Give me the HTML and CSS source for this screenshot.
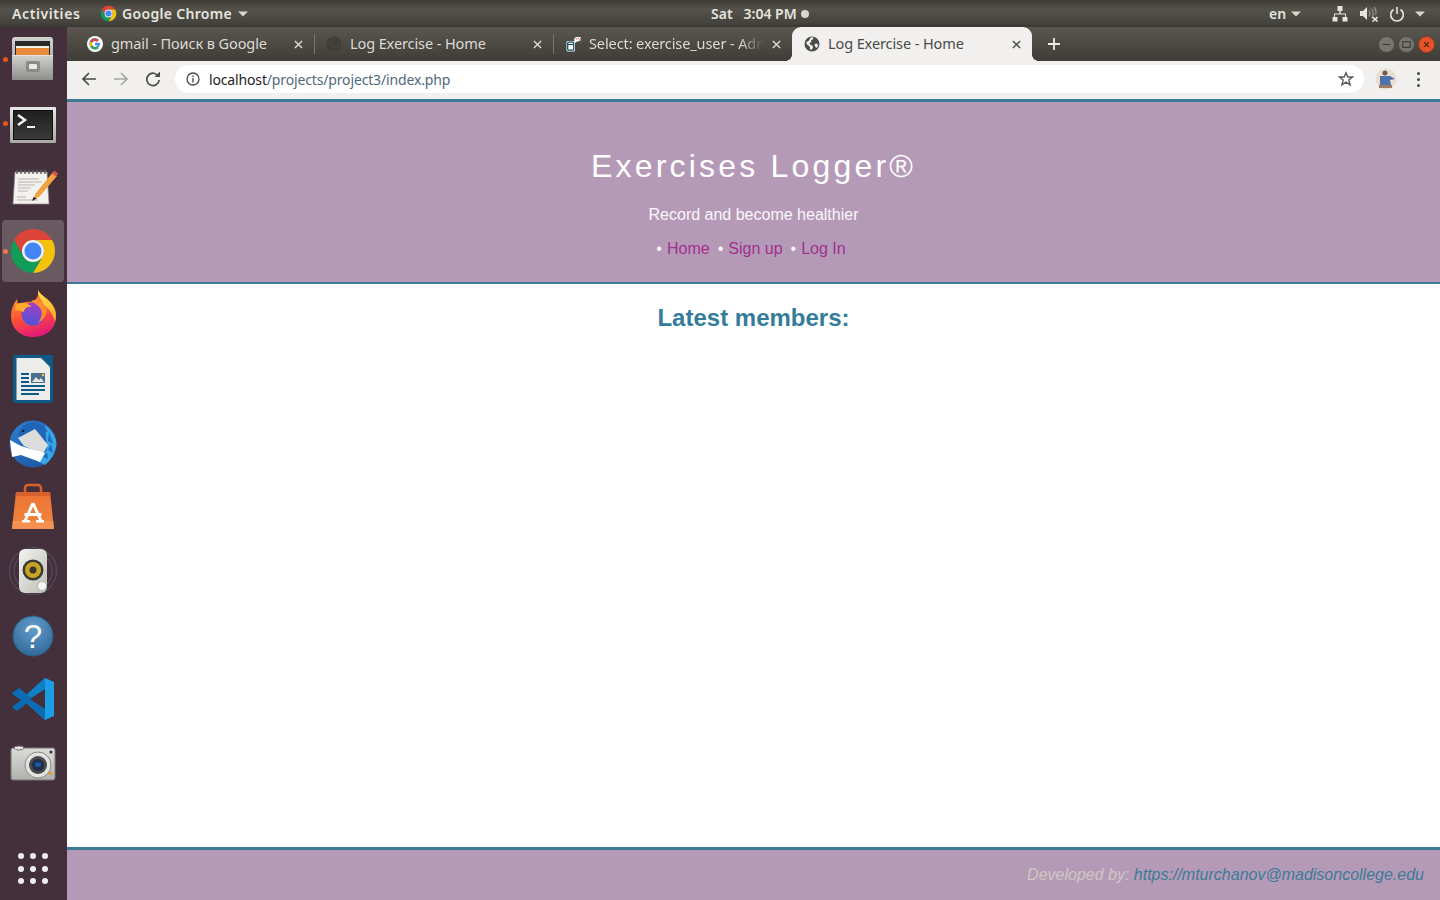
FILE: index.html
```html
<!DOCTYPE html>
<html lang="en">
<head>
<meta charset="utf-8">
<title>Log Exercise - Home</title>
<link rel="stylesheet" href="styles.css">
</head>
<body>
<svg class="defs" width="0" height="0" aria-hidden="true">
  <defs>
    <symbol id="chrome" viewBox="0 0 48 48">
      <path fill="#db4437" d="M24 2A22 22 0 0 1 43.05 13H24A11 11 0 0 0 14.47 29.5L4.95 13A22 22 0 0 1 24 2Z"/>
      <path fill="#f4c20d" d="M43.05 13A22 22 0 0 1 24 46L33.53 29.5A11 11 0 0 0 24 13Z"/>
      <path fill="#0f9d58" d="M24 46A22 22 0 0 1 4.95 13L14.47 29.5A11 11 0 0 0 33.53 29.5Z"/>
      <circle cx="24" cy="24" r="11" fill="#f1f1f1"/>
      <circle cx="24" cy="24" r="8.5" fill="#4285f4"/>
    </symbol>
    <symbol id="globe" viewBox="0 0 16 16">
      <circle cx="8" cy="8" r="7.5" fill="currentColor"/>
      <path fill="var(--land, #f1f0ee)" d="M2 6.500 5 4.500 6.500 1.500 9.500 1.200 9 3.200 7 4.200 7.500 6 5.500 7 6.500 9 8.500 9.500 9 11.500 7.500 14 6 13 5.800 10.500 3.500 9ZM10.500 8 13 7.500 14.300 9.500 12.500 12 11 10.500Z"/>
    </symbol>
    <symbol id="close" viewBox="0 0 10 10">
      <path d="M1 1 9 9M9 1 1 9" fill="none" stroke="currentColor" stroke-width="1.600"/>
    </symbol>
    <symbol id="caret" viewBox="0 0 10 6">
      <path d="M0 .5H10L5 5.500Z" fill="currentColor"/>
    </symbol>
    <linearGradient id="cabinetBody" x1="0" y1="0" x2="0" y2="1"><stop offset="0" stop-color="#d2d2d0"/><stop offset="1" stop-color="#8e8e8c"/></linearGradient>
    <linearGradient id="termFrame" x1="0" y1="0" x2="0" y2="1"><stop offset="0" stop-color="#e8e8e6"/><stop offset="1" stop-color="#a8a8a6"/></linearGradient>
    <linearGradient id="termInner" x1="0" y1="0" x2="0" y2="1"><stop offset="0" stop-color="#1f1f1f"/><stop offset="1" stop-color="#3a3a3a"/></linearGradient>
    <linearGradient id="fxBody" x1=".2" y1="0" x2=".5" y2="1"><stop offset="0" stop-color="#ffa92e"/><stop offset=".55" stop-color="#ff5236"/><stop offset="1" stop-color="#e3187c"/></linearGradient>
    <linearGradient id="fxBall" x1=".6" y1="0" x2=".3" y2="1"><stop offset="0" stop-color="#a43ec4"/><stop offset="1" stop-color="#4c55d8"/></linearGradient>
    <linearGradient id="fxTop" x1="0" y1="0" x2="1" y2="1"><stop offset="0" stop-color="#ffe84a"/><stop offset="1" stop-color="#ffa629"/></linearGradient>
    <linearGradient id="bag" x1="0" y1="0" x2="0" y2="1"><stop offset="0" stop-color="#ee7434"/><stop offset="1" stop-color="#f0843f"/></linearGradient>
    <linearGradient id="speaker" x1="0" y1="0" x2="1" y2="1"><stop offset="0" stop-color="#f4f4f0"/><stop offset="1" stop-color="#bcbcb6"/></linearGradient>
    <radialGradient id="help" cx=".5" cy=".3" r=".75"><stop offset="0" stop-color="#639fcc"/><stop offset="1" stop-color="#2f6595"/></radialGradient>
    <linearGradient id="tbird" x1="0" y1="0" x2="1" y2="1"><stop offset="0" stop-color="#2f7fd2"/><stop offset="1" stop-color="#1a4f9c"/></linearGradient>
    <linearGradient id="camera" x1="0" y1="0" x2="0" y2="1"><stop offset="0" stop-color="#dcdcda"/><stop offset="1" stop-color="#b0b0ae"/></linearGradient>
  </defs>
</svg>

<header class="topbar">
  <div class="top-left">
    <span class="activities">Activities</span>
    <svg class="top-chrome"><use href="#chrome"/></svg>
    <span class="app-name">Google Chrome</span>
    <svg class="caret"><use href="#caret"/></svg>
  </div>
  <div class="clock"><span class="day">Sat</span><span>3:04 PM</span><i class="clock-dot"></i></div>
  <div class="top-right">
    <span class="lang">en</span>
    <svg class="caret caret-lang"><use href="#caret"/></svg>
    <svg class="tray tray-net" viewBox="0 0 16 16"><path fill="#e6e4de" d="M5.500 0h5v5H8.700v2.600H14V11h1.500v4.500h-5V11H13V8.600H3V11h2.500v4.500h-5V11H2V7.600h5.300V5H5.500Z"/></svg>
    <svg class="tray tray-vol" viewBox="0 0 18 16"><path fill="#e6e4de" d="M0 5h3l4-4v13l-4-4H0Z"/><path d="M9 4.500q2 3 0 6M11.500 2.500q3.500 5 0 10M14 1q3 4 1.500 8" fill="none" stroke="#8f8d87" stroke-width="1.300"/><path d="M12.500 11l5 4.500M17.500 11l-5 4.500" stroke="#e6e4de" stroke-width="1.600"/></svg>
    <svg class="tray tray-power" viewBox="0 0 16 16"><path d="M8 1v7" stroke="#e6e4de" stroke-width="1.600"/><path d="M4.500 3.500a6.300 6.300 0 1 0 7 0" fill="none" stroke="#e6e4de" stroke-width="1.600"/></svg>
    <svg class="caret caret-power"><use href="#caret"/></svg>
  </div>
</header>

<div class="desktop">
  <nav class="dock">
    <div class="dock-item running">
      <svg class="dock-icon" viewBox="0 0 48 48">
        <rect x="3" y="1" width="41" height="43" rx="3" fill="url(#cabinetBody)"/>
        <rect x="6" y="5" width="35" height="14" fill="#2b2a2a"/>
        <rect x="7" y="10" width="33" height="2" fill="#f4f1e8"/>
        <rect x="7" y="12" width="33" height="7" fill="#e98b3d"/>
        <rect x="3" y="19" width="41" height="25" rx="1" fill="url(#cabinetBody)"/>
        <rect x="3" y="19" width="41" height="1" fill="#e4e4e2"/>
        <rect x="17" y="25" width="14" height="11" rx="2" fill="#8a8a88"/>
        <rect x="20" y="28" width="8" height="5" rx="1" fill="#e8e8e6"/>
      </svg>
    </div>
    <div class="dock-item running">
      <svg class="dock-icon" viewBox="0 0 48 48">
        <rect x="1" y="7" width="46" height="36" rx="1" fill="url(#termFrame)"/>
        <rect x="4.500" y="10.500" width="39" height="29" fill="url(#termInner)" stroke="#111" stroke-width="1"/>
        <path d="M9 15 16 20 9 25" fill="none" stroke="#f2f2f0" stroke-width="2.500"/>
        <rect x="18" y="26" width="8" height="2" fill="#f2f2f0"/>
      </svg>
    </div>
    <div class="dock-item">
      <svg class="dock-icon" viewBox="0 0 48 48">
        <path d="M6 8H38L40 40H4Z" fill="#f3f2ee" stroke="#8f8d88" stroke-width=".7"/>
        <path d="M8 5v5M12 5v5M16 5v5M20 5v5M24 5v5M28 5v5M32 5v5M36 5v5" stroke="#555" stroke-width="1.300"/>
        <path d="M9 15H30M9 18H33M9 21H26M9 24H22M9 27H19M8 33H17M8 36H29" stroke="#b5b3ae" stroke-width="1"/>
        <path d="M24 35 27 29 44 8 48 12 30 33Z" fill="#f0a33e"/>
        <path d="M43 9.500 45.500 6.500 49 9.500 47 12.500Z" fill="#d9534f"/>
        <path d="M23 37 24.500 33 28 34.500Z" fill="#2e2b28"/>
      </svg>
    </div>
    <div class="dock-item running active">
      <svg class="dock-icon"><use href="#chrome"/></svg>
    </div>
    <div class="dock-item">
      <svg class="dock-icon" viewBox="0 0 48 48">
        <path d="M29 -2C31 3 38 6 42 11 47 17 48 24 46 31 43 40 34 45 24 45 11 45 2 36 2 24 2 18 4 12 8 7 8 10 9 12 11 13 14 10 18 9 22 10 28 8 30 3 29 -2Z" fill="url(#fxBody)"/>
        <path d="M29 -2C31 3 38 6 42 11 47 17 48 23 46 30 44 22 40 17 35 13 33 8 29 5 29 -2Z" fill="url(#fxTop)"/>
        <circle cx="24" cy="22" r="11.500" fill="url(#fxBall)"/>
        <path d="M7 13C12 9 19 11 23 15 18 14 15 17 15 20 12 19 9 18 6 19 6 17 6.500 15 7 13Z" fill="#ffa92e"/>
        <path d="M22 9C28 6 36 10 38 18 37 24 34 28 29 31 33 26 34 20 31 16 28 12 25 11 22 9Z" fill="#ff8f2e"/>
      </svg>
    </div>
    <div class="dock-item">
      <svg class="dock-icon" viewBox="0 0 48 48">
        <path d="M6 -1H33L44 10V44a3 3 0 0 1-3 3H7a3 3 0 0 1-3-3V1a2 2 0 0 1 2-2Z" fill="#0e5a88"/>
        <path d="M7.500 2H32L41 11V44H7.500Z" fill="#ececea"/>
        <path d="M33 -1H42a2 2 0 0 1 2 2V11Z" fill="#0e5a88"/>
        <path d="M12 17h8v2h-8zM12 21h8v2h-8zM12 25h8v2h-8zM12 29h24v2H12zM12 33h24v2H12zM12 37h18v2H12z" fill="#0e5a88"/>
        <rect x="22" y="17" width="14" height="10" fill="#4a6f8c"/>
        <path d="M23 26 27 21 30 24 32 22 35 26Z" fill="#e4e4e2"/>
        <circle cx="34" cy="19" r="1.300" fill="#e6c04a"/>
      </svg>
    </div>
    <div class="dock-item">
      <svg class="dock-icon" viewBox="0 0 48 48">
        <circle cx="24" cy="24" r="23.500" fill="url(#tbird)"/>
        <path d="M36 5Q47 13 47.500 24 46 37 36 45L28 41 38 30Z" fill="#38a6e6"/>
        <path d="M40 12l4 12-5-3zM42 24l2 9-5-3zM38 32l1 7-5-2z" fill="#1c6cc0"/>
        <path d="M9 15C12 5 20 1 28 3 33 5 37 8 39 12 30 10 20 11 14 18Z" fill="#1f65b4"/>
        <path d="M9 18 26 9 39 25 34 34 15 26Z" fill="#dcdcdc"/>
        <path d="M1 20 12 26 36 33 31 42 12 35 3 37Z" fill="#fff"/>
        <circle cx="14" cy="11" r="1.300" fill="#14233c"/>
      </svg>
    </div>
    <div class="dock-item">
      <svg class="dock-icon" viewBox="0 0 48 48">
        <path d="M16 8V4a3 3 0 0 1 3-3h10a3 3 0 0 1 3 3v4" fill="none" stroke="#d9602a" stroke-width="2.500"/>
        <path d="M7 8H41L45 45H3Z" fill="url(#bag)"/>
        <path d="M7 8H41L41.500 12H6.500Z" fill="#d8602c"/>
        <path d="M3.800 37H44.200L45 45H3Z" fill="#f39152"/>
        <path d="M24 19 16 37M24 19 32 37" stroke="#fff" stroke-width="3" fill="none"/>
        <path d="M15.500 29h17v3h-17zM13 36h8v2.500h-8zM27 36h8v2.500h-8z" fill="#fff"/>
      </svg>
    </div>
    <div class="dock-item">
      <svg class="dock-icon" viewBox="0 0 48 48">
        <g fill="none" stroke="#5b6079" stroke-width="1.200" opacity=".6">
          <circle cx="24" cy="23" r="23.500"/>
          <circle cx="24" cy="23" r="19"/>
        </g>
        <rect x="10" y="1" width="28" height="44" rx="6" fill="url(#speaker)"/>
        <circle cx="24" cy="22" r="10.500" fill="#3a3a38"/>
        <circle cx="24" cy="22" r="8" fill="#c9a420"/>
        <circle cx="24" cy="22" r="3.500" fill="#39362b"/>
        <circle cx="33" cy="38" r="4.500" fill="#f5f5f2" stroke="#b8b8b2"/>
      </svg>
    </div>
    <div class="dock-item">
      <svg class="dock-icon" viewBox="0 0 48 48">
        <circle cx="24" cy="24" r="20" fill="url(#help)" stroke="#2a5c88"/>
        <text class="help-mark" x="24" y="36" text-anchor="middle">?</text>
      </svg>
    </div>
    <div class="dock-item">
      <svg class="dock-icon" viewBox="0 0 48 48">
        <path d="M36 2 45 6V40L36 44 13 23Z" fill="#1b9de8"/>
        <path d="M36 2V13L20 29 13 23Z" fill="#0f7fc8"/>
        <path d="M36 44V33L10 12 3 17 3 18 12 24 3 31 8 35 18 27Z" fill="#0b6cb4"/>
        <path d="M36 13 21 23 36 33Z" fill="#44303a"/>
      </svg>
    </div>
    <div class="dock-item">
      <svg class="dock-icon" viewBox="0 0 48 48">
        <rect x="2" y="8" width="44" height="32" rx="2" fill="url(#camera)" stroke="#77776f"/>
        <ellipse cx="10" cy="8" rx="5" ry="2" fill="#e6e6e4" stroke="#77776f"/>
        <circle cx="29" cy="25" r="13" fill="#e2e2e0" stroke="#8a8a88"/>
        <circle cx="29" cy="25" r="9" fill="#4a4a4a"/>
        <circle cx="29" cy="25" r="6" fill="#1f2c4a"/>
        <rect x="26" y="22.500" width="6" height="4" fill="#1a5aa8"/>
        <rect x="40" y="32" width="3" height="3" fill="#e89a28"/>
        <circle cx="42" cy="12" r="1.500" fill="#333"/>
      </svg>
    </div>
    <div class="apps-grid">
      <i></i><i></i><i></i><i></i><i></i><i></i><i></i><i></i><i></i>
    </div>
  </nav>

  <div class="browser">
    <div class="tabstrip">
      <div class="tab">
        <svg class="favicon" viewBox="0 0 16 16">
          <circle cx="8" cy="8" r="8" fill="#fff"/>
          <path d="M12.800 6.800H8V9.200H10.700A3 3 0 1 1 10 5.700L11.800 4A5.400 5.400 0 1 0 13 8Q13 7.300 12.800 6.800Z" fill="#4285f4"/>
          <path d="M3.200 5.400A5.400 5.400 0 0 1 11.800 4L10 5.700A3 3 0 0 0 5.300 6.800Z" fill="#ea4335"/>
          <path d="M3.200 5.400 5.300 6.800A3 3 0 0 0 5.300 9.200L3.200 10.800A5.400 5.400 0 0 1 3.200 5.400Z" fill="#fbbc05"/>
          <path d="M3.200 10.800 5.300 9.200A3 3 0 0 0 10 10.300L11.800 12A5.400 5.400 0 0 1 3.200 10.800Z" fill="#34a853"/>
        </svg>
        <span class="tab-title">gmail - Поиск в Google</span>
        <svg class="tab-close"><use href="#close"/></svg>
      </div>
      <div class="tab">
        <svg class="favicon favicon-dim"><use href="#globe"/></svg>
        <span class="tab-title">Log Exercise - Home</span>
        <svg class="tab-close"><use href="#close"/></svg>
      </div>
      <div class="tab tab-last">
        <svg class="favicon" viewBox="0 0 16 16">
          <rect x="1.500" y="5" width="8.500" height="10.500" rx="1.500" fill="#fff"/>
          <rect x="2.700" y="6.200" width="6" height="8" rx="1" fill="#fff" stroke="#0b4f63" stroke-width="1.200"/>
          <path d="M3 8.500h5.500" stroke="#0b4f63" stroke-width="1"/>
          <path d="M9 3 11 1H15.500V5L12 5.500 10 7Z" fill="#fff"/>
          <path d="M11 3h1M13 2.500h1M14 4h1" stroke="#d33" stroke-width="1.200"/>
        </svg>
        <span class="tab-title tab-fade">Select: exercise_user - Adminer</span>
        <svg class="tab-close"><use href="#close"/></svg>
      </div>
      <div class="tab tab-active">
        <svg class="favicon"><use href="#globe"/></svg>
        <span class="tab-title">Log Exercise - Home</span>
        <svg class="tab-close"><use href="#close"/></svg>
      </div>
      <svg class="new-tab" viewBox="0 0 12 12"><path d="M6 0V12M0 6H12" stroke="#eeece8" stroke-width="1.800"/></svg>
      <div class="win-controls">
        <span class="win-btn"><svg viewBox="0 0 16 16"><path d="M4 8H12" stroke="#3a3935" stroke-width="1.200"/></svg></span>
        <span class="win-btn"><svg viewBox="0 0 16 16"><rect x="4" y="5" width="8" height="6" fill="none" stroke="#3a3935" stroke-width="1.200"/></svg></span>
        <span class="win-btn win-close"><svg viewBox="0 0 16 16"><path d="M5.500 5.500 10.500 10.500M10.500 5.500 5.500 10.500" stroke="#4a2010" stroke-width="1.200"/></svg></span>
      </div>
    </div>
    <div class="toolbar">
      <svg class="tool" viewBox="0 0 16 16"><path d="M15 8H2M8 2 2 8 8 14" fill="none" stroke="#4a4a48" stroke-width="1.700"/></svg>
      <svg class="tool" viewBox="0 0 16 16"><path d="M1 8H14M8 2 14 8 8 14" fill="none" stroke="#a6a6a4" stroke-width="1.700"/></svg>
      <svg class="tool" viewBox="0 0 16 16"><path d="M13.500 5.500A6.200 6.200 0 1 0 14.200 9" fill="none" stroke="#4a4a48" stroke-width="1.700"/><path d="M9.500 6H15V.5Z" fill="#4a4a48"/></svg>
      <div class="omnibox">
        <svg class="info" viewBox="0 0 14 14"><circle cx="7" cy="7" r="6" fill="none" stroke="#4a4a48" stroke-width="1.300"/><path d="M7 6V10.500M7 3.500V5" stroke="#4a4a48" stroke-width="1.400"/></svg>
        <span class="url"><b>localhost</b>/projects/project3/index.php</span>
        <svg class="star" viewBox="0 0 16 16"><path d="M8 1.800 9.800 6H14.500L10.800 9 12.100 13.800 8 11.100 3.900 13.800 5.200 9 1.500 6H6.200Z" fill="none" stroke="#5a5a58" stroke-width="1.400"/></svg>
      </div>
      <svg class="avatar" viewBox="0 0 22 22">
        <circle cx="11" cy="11" r="10.500" fill="#eadfce"/>
        <circle cx="10" cy="5" r="2.500" fill="#6e5a52"/>
        <path d="M5 8H15L20 11 15 12 16 17H5Z" fill="#4a72ac"/>
        <path d="M4 17H17V20H4Z" fill="#a07a6a"/>
      </svg>
      <span class="menu"><i></i><i></i><i></i></span>
    </div>
    <div class="page">
      <div class="site-head">
        <h1>Exercises Logger®</h1>
        <p class="tagline">Record and become healthier</p>
        <ul class="site-nav">
          <li><a href="#">Home</a></li>
          <li><a href="#">Sign up</a></li>
          <li><a href="#">Log In</a></li>
        </ul>
      </div>
      <main class="content">
        <h2>Latest members:</h2>
      </main>
      <footer class="site-foot">Developed by: <a href="#">https://mturchanov@madisoncollege.edu</a></footer>
    </div>
  </div>
</div>
</body>
</html>
```

FILE: styles.css
```css
* { box-sizing: border-box; }
html, body { height: 100%; }
body {
  margin: 0;
  height: 900px;
  overflow: hidden;
  display: flex;
  flex-direction: column;
  font-family: "Liberation Sans", Arial, sans-serif;
  background: #fff;
}
.defs { display: block; height: 0; }
svg { display: block; flex: none; }

/* GNOME top bar */
.topbar {
  flex: none;
  height: 27px;
  display: flex;
  align-items: center;
  padding: 0 15px 0 12px;
  background: linear-gradient(#3d3b37, #55524b 35%, #45433e 85%, #383733);
  color: #e6e4de;
  font: 600 14px "Noto Sans", sans-serif;
}
.top-left { display: flex; align-items: center; width: 699px; }
.activities { width: 88px; letter-spacing: .6px; }
.top-chrome { width: 17px; height: 17px; margin-right: 5px; }
.app-name { width: 116px; letter-spacing: .32px; white-space: nowrap; }
.caret { width: 10px; height: 6px; color: #d8d6d0; }
.clock { display: flex; align-items: center; gap: 11px; }
.clock-dot { width: 8px; height: 8px; border-radius: 50%; background: #d8d6d0; margin-left: -7px; }
.top-right { display: flex; align-items: center; margin-left: auto; }
.lang { width: 22px; }
.caret-lang { margin-right: 31px; }
.tray { height: 16px; }
.tray-net { width: 16px; margin-right: 12px; }
.tray-vol { width: 18px; margin-right: 11px; }
.tray-power { width: 16px; margin-right: 10px; }

/* Desktop */
.desktop { flex: 1; display: flex; min-height: 0; }
.dock {
  flex: none;
  width: 67px;
  display: flex;
  flex-direction: column;
  padding-top: 1px;
  background: #44303a;
}
.dock-item {
  position: relative;
  height: 64px;
  display: flex;
  align-items: center;
  justify-content: center;
  padding-right: 1px;
}
.dock-icon { width: 48px; height: 48px; overflow: visible; }
.running::before {
  content: "";
  position: absolute;
  left: 3px;
  top: 29px;
  width: 5px;
  height: 5px;
  border-radius: 50%;
  background: #e95420;
}
.active::after {
  content: "";
  position: absolute;
  left: 2px;
  top: 0;
  width: 62px;
  height: 62px;
  border-radius: 4px;
  background: rgba(255,255,255,.2);
}
.active .dock-icon { position: relative; z-index: 1; top: -1px; }
.help-mark { font: 400 33px "Liberation Sans", sans-serif; fill: #fff; }
.apps-grid {
  margin-top: auto;
  margin-bottom: 16px;
  margin-left: 18px;
  width: 32px;
  display: grid;
  grid-template-columns: repeat(3, 6px);
  grid-auto-rows: 6px;
  gap: 6.500px 6px;
}
.apps-grid i { border-radius: 50%; background: #eee; }

/* Browser */
.browser { flex: 1; min-width: 0; display: flex; flex-direction: column; }
.tabstrip {
  flex: none;
  height: 34px;
  display: flex;
  align-items: center;
  padding-left: 8px;
  background: linear-gradient(#5a564f, #3f3d38);
  font: 14.500px "Noto Sans", sans-serif;
  color: #dcdad5;
}
.tab {
  position: relative;
  width: 239px;
  height: 34px;
  display: flex;
  align-items: center;
  padding-left: 12px;
}
.tab::after {
  content: "";
  position: absolute;
  right: -1px;
  top: 7px;
  width: 1px;
  height: 20px;
  background: #77746d;
}
.tab-last::after { content: none; }
.tab-active {
  width: 240px;
  border-radius: 9px 9px 0 0;
  background: #f1f0ee;
  color: #4a4a48;
}
.tab-active::before,
.tab-active::after {
  content: "";
  position: absolute;
  top: auto;
  bottom: 0;
  width: 6px;
  height: 6px;
  background: radial-gradient(circle at 0 0, #42403b 5.500px, #f1f0ee 6px);
}
.tab-active::before { left: -6px; }
.tab-active::after { right: -6px; transform: scaleX(-1); }
.favicon { width: 16px; height: 16px; margin-right: 8px; color: #4a4a48; }
.favicon-dim { color: #3e3d39; --land: #46443f; }
.tab-title {
  width: 180px;
  position: relative;
  top: -1px;
  white-space: nowrap;
  overflow: hidden;
  letter-spacing: -.1px;
}
.tab-fade {
  width: 175px;
  -webkit-mask-image: linear-gradient(90deg, #000 150px, transparent);
  mask-image: linear-gradient(90deg, #000 150px, transparent);
}
.tab-close { width: 9px; height: 9px; margin-left: auto; margin-right: 11px; color: #dcdad5; }
.tab-active .tab-close { color: #4a4a48; margin-right: 11px; }
.new-tab { width: 12px; height: 12px; margin-left: 16px; }
.win-controls { display: flex; gap: 3px; margin-left: auto; padding-right: 5px; }
.win-btn { width: 17px; height: 17px; border-radius: 50%; background: #77756f; border: 1px solid #4a4843; }
.win-btn svg { width: 15px; height: 15px; }
.win-close { background: #e5552a; border-color: #8f3a1e; }

.toolbar {
  flex: none;
  height: 38px;
  display: flex;
  align-items: center;
  padding: 4px 0 6px 14px;
  background: #f1f0ee;
}
.tool { width: 16px; height: 16px; margin-right: 16px; }
.toolbar .tool:nth-child(3) { margin-right: 14px; }
.omnibox {
  width: 1189px;
  height: 28px;
  display: flex;
  align-items: center;
  padding: 0 10px 0 11px;
  border-radius: 14px;
  background: #fff;
}
.info { width: 14px; height: 14px; margin-right: 9px; }
.url { font: 14px "Noto Sans", sans-serif; color: #50687a; letter-spacing: -.15px; }
.url b { font-weight: 400; color: #222; }
.star { width: 16px; height: 16px; margin-left: auto; }
.avatar { width: 22px; height: 22px; margin-left: 11px; }
.menu { display: flex; flex-direction: column; gap: 3px; margin-left: 20px; }
.menu i { width: 3px; height: 3px; border-radius: 50%; background: #4a4a48; }

/* Page content */
.page { flex: 1; min-height: 0; display: flex; flex-direction: column; background: #fff; }
.site-head {
  flex: none;
  height: 185px;
  padding-top: 46px;
  text-align: center;
  color: #faf6fa;
  background: #b59ab8;
  border-top: 3px solid #3d7a96;
  border-bottom: 2px solid #3d7a96;
}
h1 {
  margin: 0;
  font-size: 32px;
  font-weight: 400;
  line-height: 37px;
  letter-spacing: 3.200px;
  color: #fff;
}
.tagline { margin: 21px 0 0; font-size: 16px; line-height: 18px; }
.site-nav {
  display: flex;
  justify-content: center;
  gap: 8px;
  margin: 16px 0 0;
  padding: 0 5px 0 0;
  list-style: none;
  font-size: 16px;
  line-height: 18px;
}
.site-nav li::before { content: "•"; margin-right: 5px; }
.site-nav a, .site-foot a { text-decoration: none; }
.site-nav a { color: #a0308f; }
.content { flex: 1; text-align: center; }
h2 {
  margin: 20px 0 0;
  font-size: 24px;
  line-height: 28px;
  color: #347c9b;
}
.site-foot {
  flex: none;
  height: 53px;
  padding: 16px 16px 0 0;
  text-align: right;
  font-size: 16px;
  line-height: 18px;
  font-style: italic;
  color: #d0c6c2;
  background: #b59ab8;
  border-top: 3px solid #3d7a96;
}
.site-foot a { color: #3d7a96; }
```
